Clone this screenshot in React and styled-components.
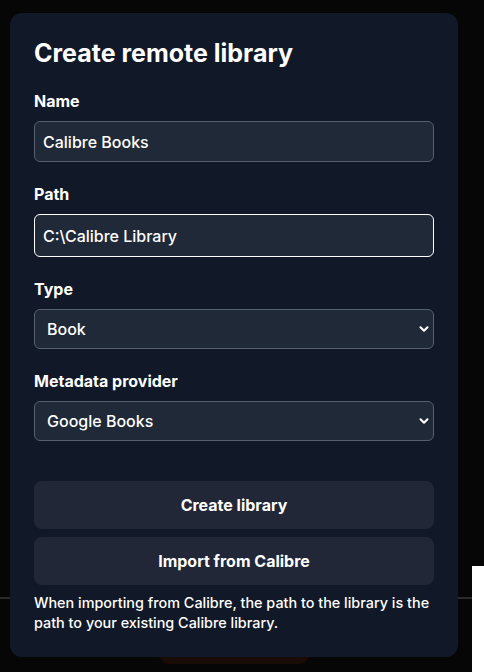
import React, { useState } from 'react';
import styled, { createGlobalStyle } from "styled-components";
import { ChevronDown } from "lucide-react";

const GlobalStyle = createGlobalStyle`
  html, body {
    margin: 0;
    padding: 0;
    background: #060606;
  }
  * { box-sizing: border-box; }
`;

export default function App() {
  const [form, setForm] = useState({
    name: "Calibre Books",
    path: "C:\\Calibre Library",
    type: "book",
    provider: "google",
  });

  const update = (e) => setForm({ ...form, [e.target.name]: e.target.value });

  return (
    <Page>
      <GlobalStyle />
      {/* dimmed page behind the dialog */}
      <Divider />
      <SidePanel />
      <GlowButton />

      <Modal>
        <Title>Create remote library</Title>

        <Field>
          <Label>Name</Label>
          <TextInput name="name" value={form.name} onChange={update} />
        </Field>

        <Field>
          <Label>Path</Label>
          <TextInput name="path" value={form.path} onChange={update} $focused autoFocus />
        </Field>

        <Field>
          <Label>Type</Label>
          <SelectWrap>
            <Select name="type" value={form.type} onChange={update}>
              <option value="book">Book</option>
              <option value="comic">Comic</option>
            </Select>
            <Chevron size={14} strokeWidth={3.5} />
          </SelectWrap>
        </Field>

        <Field>
          <Label>Metadata provider</Label>
          <SelectWrap>
            <Select name="provider" value={form.provider} onChange={update}>
              <option value="google">Google Books</option>
              <option value="openlibrary">Open Library</option>
            </Select>
            <Chevron size={14} strokeWidth={3.5} />
          </SelectWrap>
        </Field>

        <Actions>
          <Button>Create library</Button>
          <Button>Import from Calibre</Button>
        </Actions>

        <Hint>
          When importing from Calibre, the path to the library is the path to your existing Calibre library.
        </Hint>
      </Modal>
    </Page>
  );
}

const Page = styled.div`
  position: relative;
  width: 484px;
  height: 672px;
  overflow: hidden;
  background: #060606;
  font-family: Inter, "Noto Sans", sans-serif;
  padding: 13px 0 0 10px;
`;

const Divider = styled.div`
  position: absolute;
  left: 0;
  right: 12px;
  top: 597px;
  height: 2px;
  background: #2b2b2b;
`;

const SidePanel = styled.div`
  position: absolute;
  left: 472px;
  top: 566px;
  width: 12px;
  bottom: 0;
  background: #ffffff;
`;

const GlowButton = styled.div`
  position: absolute;
  left: 158px;
  top: 640px;
  width: 152px;
  height: 24px;
  border-radius: 12px;
  background: #1a0c02;
`;

const Modal = styled.div`
  position: relative;
  width: 448px;
  background: #111827;
  border-radius: 12px;
  padding: 24px;
  display: flex;
  flex-direction: column;
  color: #ffffff;
`;

const Title = styled.h1`
  margin: 0;
  font-size: 25px;
  line-height: 32px;
  font-weight: 700;
`;

const Field = styled.div`
  display: flex;
  flex-direction: column;
  gap: 10px;
  margin-top: 22px;
`;

const Label = styled.label`
  font-size: 16px;
  line-height: 20px;
  font-weight: 700;
`;

const TextInput = styled.input`
  width: 100%;
  height: ${(p) => (p.$focused ? "43px" : "41px")};
  background: #1f2937;
  color: #ffffff;
  border: 1px solid ${(p) => (p.$focused ? "#ffffff" : "#566070")};
  border-radius: 6px;
  padding: 0 8px;
  font-family: inherit;
  font-size: 16px;
  font-weight: 500;
  outline: none;
  caret-color: #ffffff;
`;

const SelectWrap = styled.div`
  position: relative;
`;

const Select = styled.select`
  width: 100%;
  height: 40px;
  appearance: none;
  background: #1f2937;
  color: #ffffff;
  border: 1px solid #566070;
  border-radius: 6px;
  padding: 0 12px;
  font-family: inherit;
  font-size: 16px;
  font-weight: 500;
  outline: none;
`;

const Chevron = styled(ChevronDown)`
  position: absolute;
  right: 3px;
  top: 13px;
  color: #ffffff;
  pointer-events: none;
`;

const Actions = styled.div`
  display: flex;
  flex-direction: column;
  gap: 8px;
  margin-top: 40px;
`;

const Button = styled.button`
  height: 48px;
  border: none;
  border-radius: 8px;
  background: #212736;
  color: #ffffff;
  font-family: inherit;
  font-size: 16px;
  font-weight: 700;
  cursor: pointer;
`;

const Hint = styled.p`
  margin: 8px 0 0;
  font-size: 14.4px;
  line-height: 20px;
  font-weight: 500;
`;
